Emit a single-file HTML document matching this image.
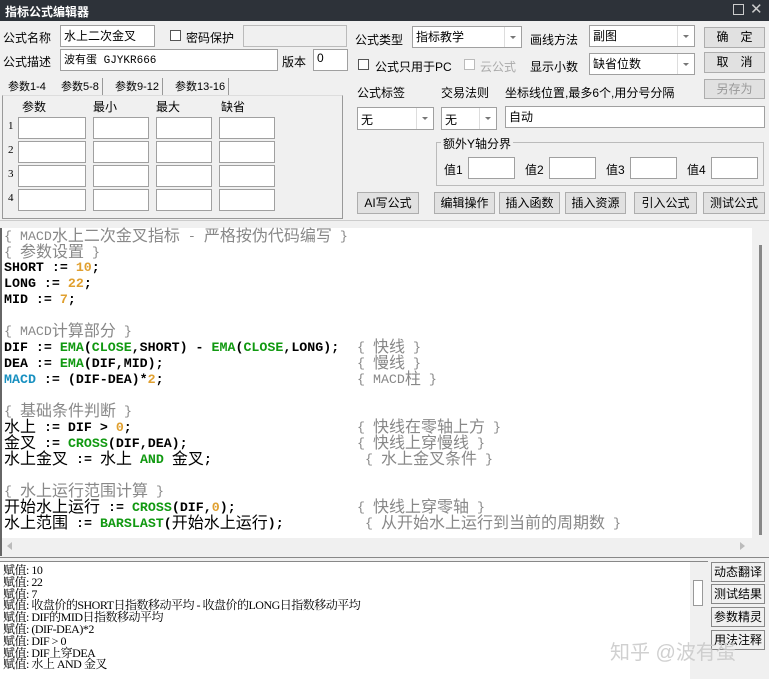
<!DOCTYPE html>
<html><head><meta charset="utf-8"><style>
*{box-sizing:border-box;margin:0;padding:0}
body{width:769px;height:679px;overflow:hidden;background:#f0f0f0;font-family:"Liberation Sans","Noto Sans CJK SC",sans-serif;font-size:12px;color:#000;position:relative}
.a{position:absolute;white-space:nowrap}
.tb{left:0;top:0;width:769px;height:21px;background:#2d3239;color:#fff;font-weight:bold;font-size:12px;padding:3px 0 0 5px}
.in{position:absolute;background:#fff;border:1px solid #a0a0a0;font-size:12px;padding:1px 3px;white-space:nowrap}
.btn{position:absolute;background:#e1e1e1;border:1px solid #adadad;font-size:12px;text-align:center;white-space:nowrap}
.cb{position:absolute;width:11px;height:11px;border:1px solid #555;background:#fff}
.dd{position:absolute;right:0;top:0;bottom:0;width:17px;border-left:1px solid #ddd;background:#fff}
.dd:after{content:"";position:absolute;left:5px;top:9px;border:3px solid transparent;border-top:3px solid #777}
.code{position:absolute;left:0;top:228px;width:752px;height:310px;background:#fff;border-left:2px solid #666;font-family:"Liberation Mono","Noto Sans CJK SC",monospace;font-weight:bold;font-size:13.3px}
.l{position:absolute;left:2px;white-space:pre;line-height:16px;height:16px}
.c{color:#888;font-weight:normal;font-family:"Liberation Mono","Noto Sans CJK SC",monospace}
.z{display:inline-block;height:16px;vertical-align:top;font-size:16px;font-weight:normal;font-family:"Noto Sans CJK SC",sans-serif;line-height:16px;position:relative;top:-3px}
.n{color:#e0a030}.f{color:#119911}.m{color:#1890c0}
.out{position:absolute;left:0;top:561px;width:708px;height:118px;background:#fff;border-top:1px solid #888;font-family:"Liberation Serif","Noto Serif CJK SC",serif;font-size:12px;line-height:11.8px;padding:3px 0 0 3px;letter-spacing:-0.5px}
.rb{position:absolute;left:711px;width:54px;height:20px;background:#f0f0f0;border:1px solid #888;font-size:12px;text-align:center;line-height:18px}
.pi{position:absolute;width:68px;height:22px;background:#fff;border:1px solid #a0a0a0}
</style></head><body>
<div class="a tb">指标公式编辑器</div>
<div class="a" style="left:733px;top:4px;width:11px;height:11px;border:1px solid #ccc"></div>
<div class="a" style="left:750px;top:0px;color:#ccc;font-size:15px">✕</div>

<div class="a" style="left:3px;top:29px">公式名称</div>
<div class="in" style="left:60px;top:25px;width:95px;height:22px">水上二次金叉</div>
<div class="cb" style="left:170px;top:30px"></div>
<div class="a" style="left:186px;top:29px">密码保护</div>
<div class="a" style="left:243px;top:25px;width:104px;height:22px;border:1px solid #bbb;background:#f0f0f0"></div>
<div class="a" style="left:3px;top:53px">公式描述</div>
<div class="in" style="left:60px;top:49px;width:218px;height:22px;font-family:'Liberation Mono','Noto Sans CJK SC',monospace;font-size:11px">波有蛋 GJYKR666</div>
<div class="a" style="left:282px;top:53px">版本</div>
<div class="in" style="left:313px;top:49px;width:35px;height:22px">0</div>

<div class="a" style="left:3px;top:76px;width:52px;height:19px;font-size:11px;padding:2px 0 0 5px">参数1-4</div>
<div class="a" style="left:58px;top:78px;font-size:11px;border-right:1px solid #999;padding:0 3px;height:17px">参数5-8</div>
<div class="a" style="left:112px;top:78px;font-size:11px;border-right:1px solid #999;padding:0 3px;height:17px">参数9-12</div>
<div class="a" style="left:172px;top:78px;font-size:11px;border-right:1px solid #999;padding:0 3px;height:17px">参数13-16</div>
<div class="a" style="left:2px;top:95px;width:341px;height:124px;border:1px solid #999;border-top:1px solid #ddd"></div>
<div class="a" style="left:22px;top:98px">参数</div><div class="a" style="left:93px;top:98px">最小</div><div class="a" style="left:156px;top:98px">最大</div><div class="a" style="left:221px;top:98px">缺省</div>
<div class="a" style="left:8px;top:120px;font-size:11px;font-family:'Liberation Serif',serif">1</div>
<div class="a" style="left:8px;top:144px;font-size:11px;font-family:'Liberation Serif',serif">2</div>
<div class="a" style="left:8px;top:168px;font-size:11px;font-family:'Liberation Serif',serif">3</div>
<div class="a" style="left:8px;top:192px;font-size:11px;font-family:'Liberation Serif',serif">4</div>
<div class="pi" style="left:18px;top:117px;width:68px"></div><div class="pi" style="left:93px;top:117px;width:56px"></div><div class="pi" style="left:156px;top:117px;width:56px"></div><div class="pi" style="left:219px;top:117px;width:56px"></div>
<div class="pi" style="left:18px;top:141px;width:68px"></div><div class="pi" style="left:93px;top:141px;width:56px"></div><div class="pi" style="left:156px;top:141px;width:56px"></div><div class="pi" style="left:219px;top:141px;width:56px"></div>
<div class="pi" style="left:18px;top:165px;width:68px"></div><div class="pi" style="left:93px;top:165px;width:56px"></div><div class="pi" style="left:156px;top:165px;width:56px"></div><div class="pi" style="left:219px;top:165px;width:56px"></div>
<div class="pi" style="left:18px;top:189px;width:68px"></div><div class="pi" style="left:93px;top:189px;width:56px"></div><div class="pi" style="left:156px;top:189px;width:56px"></div><div class="pi" style="left:219px;top:189px;width:56px"></div>

<div class="a" style="left:355px;top:31px">公式类型</div>
<div class="in" style="left:412px;top:26px;width:110px;height:22px">指标教学<div class="dd"></div></div>
<div class="a" style="left:530px;top:31px">画线方法</div>
<div class="in" style="left:589px;top:25px;width:106px;height:22px">副图<div class="dd"></div></div>
<div class="btn" style="left:704px;top:27px;width:61px;height:21px;line-height:19px">确　定</div>
<div class="cb" style="left:358px;top:59px"></div>
<div class="a" style="left:375px;top:58px">公式只用于PC</div>
<div class="cb" style="left:464px;top:59px;border-color:#bbb"></div>
<div class="a" style="left:480px;top:58px;color:#aaa">云公式</div>
<div class="a" style="left:530px;top:58px">显示小数</div>
<div class="in" style="left:589px;top:53px;width:106px;height:22px">缺省位数<div class="dd"></div></div>
<div class="btn" style="left:704px;top:52px;width:61px;height:21px;line-height:19px">取　消</div>
<div class="a" style="left:357px;top:84px">公式标签</div>
<div class="a" style="left:441px;top:84px">交易法则</div>
<div class="a" style="left:505px;top:84px">坐标线位置,最多6个,用分号分隔</div>
<div class="btn" style="left:704px;top:79px;width:61px;height:20px;line-height:18px;color:#999">另存为</div>
<div class="in" style="left:357px;top:107px;width:77px;height:23px;padding-top:3px">无<div class="dd"></div></div>
<div class="in" style="left:441px;top:107px;width:56px;height:23px;padding-top:3px">无<div class="dd"></div></div>
<div class="in" style="left:505px;top:106px;width:260px;height:22px">自动</div>
<div class="a" style="left:436px;top:142px;width:328px;height:44px;border:1px solid #bbb"></div>
<div class="a" style="left:441px;top:135px;background:#f0f0f0;padding:0 2px">额外Y轴分界</div>
<div class="a" style="left:444px;top:161px">值1</div><div class="pi" style="left:468px;top:157px;width:47px"></div>
<div class="a" style="left:525px;top:161px">值2</div><div class="pi" style="left:549px;top:157px;width:47px"></div>
<div class="a" style="left:606px;top:161px">值3</div><div class="pi" style="left:630px;top:157px;width:47px"></div>
<div class="a" style="left:687px;top:161px">值4</div><div class="pi" style="left:711px;top:157px;width:47px"></div>
<div class="btn" style="left:357px;top:192px;width:62px;height:22px;line-height:20px">AI写公式</div>
<div class="btn" style="left:434px;top:192px;width:61px;height:22px;line-height:20px">编辑操作</div>
<div class="btn" style="left:499px;top:192px;width:61px;height:22px;line-height:20px">插入函数</div>
<div class="btn" style="left:565px;top:192px;width:61px;height:22px;line-height:20px">插入资源</div>
<div class="btn" style="left:634px;top:192px;width:63px;height:22px;line-height:20px">引入公式</div>
<div class="btn" style="left:703px;top:192px;width:62px;height:22px;line-height:20px">测试公式</div>

<div class="a" style="left:0;top:220px;width:769px;height:1px;background:#ccc"></div>
<div class="code">
<div class="l c" style="top:1px">{ MACD<span class="z">水上二次金叉指标</span> - <span class="z">严格按伪代码编写</span> }</div>
<div class="l c" style="top:17px">{ <span class="z">参数设置</span> }</div>
<div class="l" style="top:32px">SHORT := <span class="n">10</span>;</div>
<div class="l" style="top:48px">LONG := <span class="n">22</span>;</div>
<div class="l" style="top:64px">MID := <span class="n">7</span>;</div>
<div class="l c" style="top:96px">{ MACD<span class="z">计算部分</span> }</div>
<div class="l" style="top:112px">DIF := <span class="f">EMA</span>(<span class="f">CLOSE</span>,SHORT) - <span class="f">EMA</span>(<span class="f">CLOSE</span>,LONG);</div>
<div class="l" style="top:128px">DEA := <span class="f">EMA</span>(DIF,MID);</div>
<div class="l" style="top:144px"><span class="m">MACD</span> := (DIF-DEA)*<span class="n">2</span>;</div>
<div class="l c" style="top:112px;left:355px">{ <span class="z">快线</span> }</div>
<div class="l c" style="top:128px;left:355px">{ <span class="z">慢线</span> }</div>
<div class="l c" style="top:144px;left:355px">{ MACD<span class="z">柱</span> }</div>
<div class="l c" style="top:176px">{ <span class="z">基础条件判断</span> }</div>
<div class="l" style="top:192px"><span class="z">水上</span> := DIF &gt; <span class="n">0</span>;</div>
<div class="l" style="top:208px"><span class="z">金叉</span> := <span class="f">CROSS</span>(DIF,DEA);</div>
<div class="l" style="top:224px"><span class="z">水上金叉</span> := <span class="z">水上</span> <span class="f">AND</span> <span class="z">金叉</span>;</div>
<div class="l c" style="top:192px;left:355px">{ <span class="z">快线在零轴上方</span> }</div>
<div class="l c" style="top:208px;left:355px">{ <span class="z">快线上穿慢线</span> }</div>
<div class="l c" style="top:224px;left:363px">{ <span class="z">水上金叉条件</span> }</div>
<div class="l c" style="top:256px">{ <span class="z">水上运行范围计算</span> }</div>
<div class="l" style="top:272px"><span class="z">开始水上运行</span> := <span class="f">CROSS</span>(DIF,<span class="n">0</span>);</div>
<div class="l" style="top:288px"><span class="z">水上范围</span> := <span class="f">BARSLAST</span>(<span class="z">开始水上运行</span>);</div>
<div class="l c" style="top:272px;left:355px">{ <span class="z">快线上穿零轴</span> }</div>
<div class="l c" style="top:288px;left:363px">{ <span class="z">从开始水上运行到当前的周期数</span> }</div>
</div>
<div class="a" style="left:752px;top:228px;width:15px;height:310px;background:#f0f0f0"></div>
<div class="a" style="left:759px;top:245px;width:3px;height:290px;background:#888"></div>
<div class="a" style="left:0;top:538px;width:769px;height:18px;background:#f0f0f0;border-left:2px solid #666"></div>
<div class="a" style="left:7px;top:542px;border:4px solid transparent;border-right:5px solid #bbb;border-left:0"></div>
<div class="a" style="left:740px;top:542px;border:4px solid transparent;border-left:5px solid #bbb;border-right:0"></div>
<div class="a" style="left:0;top:557px;width:769px;height:1px;background:#888"></div>
<div class="out">赋值: 10<br>赋值: 22<br>赋值: 7<br>赋值: 收盘价的SHORT日指数移动平均 - 收盘价的LONG日指数移动平均<br>赋值: DIF的MID日指数移动平均<br>赋值: (DIF-DEA)*2<br>赋值: DIF &gt; 0<br>赋值: DIF上穿DEA<br>赋值: 水上 AND 金叉</div>
<div class="a" style="left:690px;top:562px;width:18px;height:117px;background:#f0f0f0"></div>
<div class="a" style="left:693px;top:580px;width:10px;height:26px;background:#fff;border:1px solid #999"></div>
<div class="rb" style="top:562px">动态翻译</div>
<div class="rb" style="top:584px">测试结果</div>
<div class="rb" style="top:607px">参数精灵</div>
<div class="rb" style="top:630px">用法注释</div>
<div class="a" style="left:610px;top:636px;font-size:20px;color:rgba(200,200,200,0.85)">知乎 @波有蛋</div>
</body></html>
